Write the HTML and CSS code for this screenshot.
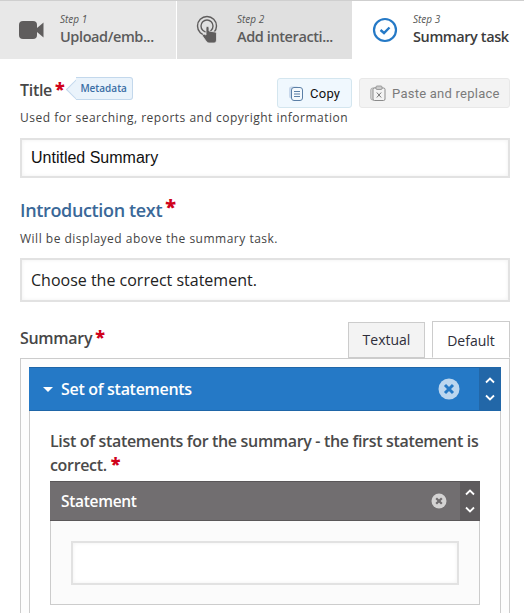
FILE: index.html
```html
<!DOCTYPE html>
<html lang="en">
<head>
  <meta charset="UTF-8" />
  <title>Summary task editor</title>
  <link rel="stylesheet" href="styles.css">
</head>
<body>

  <div class="steps">
    <div class="step step-one">
      <svg class="step-icon" width="26" height="20" viewBox="0 0 26 20"><rect x="0" y="1" width="18" height="18" rx="4" fill="#5f5d5d"/><path d="M18 8 L24.500 2.500 V17.500 L18 12 Z" fill="#5f5d5d"/></svg>
      <div class="step-text"><em>Step 1</em><span>Upload/emb...</span></div>
    </div>
    <div class="step step-two">
      <svg class="step-icon" width="24" height="30" viewBox="0 0 24 30"><circle cx="11" cy="11" r="9.500" fill="none" stroke="#5f5d5d" stroke-width="1.400"/><circle cx="11" cy="11" r="6" fill="none" stroke="#5f5d5d" stroke-width="1.400"/><path d="M10 13 C10 11 13 11 13 13 V16 L19 17 C20 17 20.500 18 20.500 19 V25 C20.500 27 19 28 18 28 H13 C12 28 11 27 10 26 L6.500 21 C6 19.500 8 18.500 10 20 Z" fill="#5f5d5d" stroke="#e0e0e0" stroke-width="0.800"/></svg>
      <div class="step-text"><em>Step 2</em><span>Add interacti...</span></div>
    </div>
    <div class="step step-three">
      <svg class="step-icon" width="26" height="26" viewBox="0 0 26 26"><circle cx="13" cy="13" r="11" fill="none" stroke="#2579c6" stroke-width="2.200"/><path d="M8.500 13 L12 16 L17.500 10.500" fill="none" stroke="#2579c6" stroke-width="2.400"/></svg>
      <div class="step-text"><em>Step 3</em><span>Summary task</span></div>
    </div>
  </div>

  <div class="form">
    <div class="title-row">
      <div class="title-left">
        <label class="field-label">Title<b class="req">*</b></label>
        <span class="metadata">Metadata</span>
      </div>
      <div class="clip-buttons">
        <button class="btn-copy">
          <svg width="16" height="16" viewBox="0 0 16 16"><rect x="1" y="1.500" width="10" height="12" rx="2.500" fill="#c9d9ec"/><rect x="3.500" y="2.500" width="11" height="13" rx="2.500" fill="#f4f9fd" stroke="#5b7fa6"/><path d="M6 6.500 H12 M6 9 H12 M6 11.500 H12" stroke="#5b7fa6"/></svg>
          Copy
        </button>
        <button class="btn-paste">
          <svg width="16" height="16" viewBox="0 0 16 16"><rect x="0.800" y="3" width="10" height="12" rx="2" fill="#ddd" stroke="#aaa"/><rect x="3" y="3" width="12" height="12.500" rx="1.500" fill="#f3f3f3" stroke="#8b8b8b"/><rect x="6" y="1" width="6" height="3.500" rx="1" fill="#ccc" stroke="#8b8b8b" stroke-width="0.800"/><path d="M6.800 7.500 L11.200 12.500 M11.200 7.500 L6.800 12.500" stroke="#777"/></svg>
          Paste and replace
        </button>
      </div>
    </div>
    <p class="hint">Used for searching, reports and copyright information</p>
    <div class="text-input input-title">Untitled Summary</div>

    <label class="field-label label-intro">Introduction text<b class="req">*</b></label>
    <p class="hint hint-intro">Will be displayed above the summary task.</p>
    <div class="text-input input-intro">Choose the correct statement.</div>

    <div class="summary-head">
      <label class="field-label label-summary">Summary<b class="req">*</b></label>
      <div class="tabs">
        <div class="tab">Textual</div>
        <div class="tab tab-active">Default</div>
      </div>
    </div>

    <div class="summary-box">
      <div class="group">
        <div class="group-head head-blue">
          <span class="caret"></span>
          <span class="group-title">Set of statements</span>
          <svg class="remove" width="22" height="22" viewBox="0 0 22 22"><circle cx="11" cy="11" r="10.500" fill="#bcd6ee"/><path d="M7 7 L15 15 M15 7 L7 15" stroke="#2579c6" stroke-width="3"/></svg>
          <div class="order order-blue">
            <svg width="10" height="7" viewBox="0 0 10 7"><path d="M1 5.500 L5 1.500 L9 5.500" fill="none" stroke="#fff" stroke-width="1.800"/></svg>
            <svg width="10" height="7" viewBox="0 0 10 7"><path d="M1 1.500 L5 5.500 L9 1.500" fill="none" stroke="#fff" stroke-width="1.800"/></svg>
          </div>
        </div>
        <div class="group-body">
          <p class="list-label">List of statements for the summary - the first statement is correct.<b class="req">*</b></p>
          <div class="statement">
            <div class="group-head head-gray">
              <span class="group-title">Statement</span>
              <svg class="remove" width="16" height="16" viewBox="0 0 16 16"><circle cx="8" cy="8" r="7.500" fill="#d4d3d3"/><path d="M5.200 5.200 L10.800 10.800 M10.800 5.200 L5.200 10.800" stroke="#6f6c6e" stroke-width="2.200"/></svg>
              <div class="order order-gray">
                <svg width="10" height="7" viewBox="0 0 10 7"><path d="M1 5.500 L5 1.500 L9 5.500" fill="none" stroke="#fff" stroke-width="1.800"/></svg>
                <svg width="10" height="7" viewBox="0 0 10 7"><path d="M1 1.500 L5 5.500 L9 1.500" fill="none" stroke="#fff" stroke-width="1.800"/></svg>
              </div>
            </div>
            <div class="statement-body">
              <div class="text-input input-statement"></div>
            </div>
          </div>
        </div>
      </div>
    </div>
  </div>

</body>
</html>
```

FILE: styles.css
```css
* {
  box-sizing: border-box;
}

html,
body {
  height: 613px;
  overflow: hidden;
}

body {
  margin: 0;
  background: #fff;
  font-family: "Open Sans", sans-serif;
  color: #3c3c3c;
}

/* steps bar */
.steps {
  display: flex;
  height: 59px;
  border-top: 1px solid #cfcfcf;
}

.step {
  display: flex;
  align-items: center;
}

.step-one {
  width: 177px;
  padding-left: 19px;
  background: #e8e8e8;
  border-right: 1px solid #fff;
}

.step-two {
  width: 175px;
  padding-left: 19px;
  background: #e0e0e0;
}

.step-three {
  flex: 1;
  padding-left: 20px;
  background: #fff;
}

.step-one .step-text {
  margin-left: 15px;
}

.step-two .step-text {
  margin-left: 17px;
}

.step-three .step-text {
  margin-left: 15px;
}

.step-text {
  display: flex;
  flex-direction: column;
}

.step-text em {
  font-size: 10px;
  line-height: 14px;
  color: #555;
}

.step-text span {
  font-size: 14.500px;
  line-height: 22px;
  font-weight: 600;
  color: #5c5c5c;
  letter-spacing: -0.4px;
}

.step-three .step-text span {
  color: #3c3c3c;
}

/* form */
.form {
  padding: 0 14px 0 20px;
}

.title-row {
  display: flex;
  justify-content: space-between;
  height: 50px;
  padding-top: 20px;
}

.title-left {
  display: flex;
  align-items: flex-start;
  height: 24px;
}

.field-label {
  font-size: 16px;
  line-height: 22px;
  font-weight: 600;
  color: #474747;
  letter-spacing: -0.3px;
}

.req {
  position: relative;
  top: -1px;
  margin-left: 3px;
  font-size: 18px;
  line-height: 10px;
  color: #d0021b;
}

.metadata {
  position: relative;
  margin-left: 12px;
  margin-top: -2px;
  height: 23px;
  padding: 0 5px 0 4px;
  background: #eaf3fb;
  border: 1px solid #c3d8ec;
  border-left: none;
  border-radius: 0 3px 3px 0;
  font-size: 10px;
  line-height: 21px;
  font-weight: 600;
  color: #3a6ea5;
}

.metadata::before {
  content: "";
  position: absolute;
  left: -7px;
  top: 4px;
  width: 14px;
  height: 14px;
  background: #eaf3fb;
  border-left: 1px solid #c3d8ec;
  border-bottom: 1px solid #c3d8ec;
  transform: rotate(45deg);
  z-index: -1;
}

.clip-buttons {
  display: flex;
  gap: 7px;
  margin-top: -1px;
}

.clip-buttons button {
  display: flex;
  align-items: center;
  gap: 6px;
  height: 30px;
  border-radius: 3px;
  font-family: Roboto, sans-serif;
  font-size: 13px;
  letter-spacing: 0.25px;
  white-space: nowrap;
}

.btn-copy {
  width: 75px;
  padding: 0 0 0 10px;
  background: #f0f8fe;
  border: 1px solid #d4e6ef;
  color: #111;
}

.btn-paste {
  width: 151px;
  padding: 0 0 0 10px;
  background: #f3f3f3;
  border: 1px solid #e8e8e8;
  color: #7b7b7b;
}

.hint {
  margin: 0;
  font-size: 12px;
  line-height: 18px;
  letter-spacing: 0.5px;
  color: #444;
}

.text-input {
  border: 2px solid #e2e2e2;
  background: #fff;
  box-shadow: inset 0 0 4px rgba(0, 0, 0, 0.06);
  padding-left: 9px;
  color: #222;
}

.input-title {
  height: 40px;
  margin-top: 11px;
  font-family: "Liberation Sans", sans-serif;
  font-size: 16px;
  line-height: 36px;
  color: #111;
}

.label-intro {
  display: block;
  margin-top: 20px;
  font-size: 18px;
  line-height: 24px;
  color: #3a6898;
  letter-spacing: -0.35px;
}

.label-intro .req {
  font-size: 20px;
  top: -3px;
  margin-left: 3px;
}

.hint-intro {
  margin-top: 8px;
}

.input-intro {
  height: 44px;
  margin-top: 10px;
  font-size: 16px;
  line-height: 40px;
}

.summary-head {
  display: flex;
  justify-content: space-between;
  height: 36px;
  margin-top: 20px;
}

.label-summary {
  margin-top: 5px;
}

.tabs {
  display: flex;
  gap: 7px;
  align-items: flex-end;
  position: relative;
  z-index: 1;
}

.tab {
  width: 77px;
  height: 36px;
  background: #f3f3f3;
  border: 1px solid #ccc;
  font-size: 14px;
  line-height: 34px;
  text-align: center;
  color: #2e2e3a;
}

.tab-active {
  width: 78px;
  height: 37px;
  background: #fff;
  border-bottom: 1px solid #fff;
  line-height: 37px;
}

.summary-box {
  height: 255px;
  padding: 8px 8px 0 8px;
  background: #fdfdfd;
  border: 1px solid #ccc;
  border-bottom: none;
}

.group {
  height: 100%;
  background: #fff;
  border-right: 1px solid #ccc;
  border-left: 1px solid #ccc;
}

.group-head {
  display: flex;
  align-items: center;
  color: #fff;
  font-weight: 600;
}

.group-title {
  flex: 1;
  letter-spacing: -0.3px;
}

.head-blue {
  height: 44px;
  margin: 0 -1px;
  padding-left: 14px;
  background: #2579c6;
  border-top: 1px solid #1f66a8;
  border-bottom: 1px solid #1f66a8;
  font-size: 16px;
}

.caret {
  width: 0;
  height: 0;
  margin-right: 8px;
  border-left: 5px solid transparent;
  border-right: 5px solid transparent;
  border-top: 5px solid #fff;
}

.order {
  display: flex;
  flex-direction: column;
  align-items: center;
  justify-content: space-around;
  align-self: stretch;
  width: 22px;
}

.order-blue {
  margin-left: 19px;
  padding: 4px 0;
  background: #2267a8;
}

.group-body {
  padding: 0 20px;
}

.list-label {
  margin: 18px 0 0 0;
  font-size: 16px;
  line-height: 24px;
  font-weight: 600;
  color: #4a4a4a;
  letter-spacing: -0.33px;
}

.list-label .req {
  margin-left: 4px;
}

.statement {
  margin-top: 4px;
}

.head-gray {
  height: 40px;
  padding-left: 11px;
  background: #716e70;
  border-top: 1px solid #5a5759;
  border-bottom: 1px solid #5a5759;
  font-size: 15.500px;
}

.order-gray {
  margin-left: 13px;
  padding: 2px 0;
  background: #5f5c5e;
  width: 20px;
}

.statement-body {
  height: 84px;
  padding: 20px 20px;
  background: #fbfbfb;
  border: 1px solid #ccc;
  border-top: none;
}

.input-statement {
  height: 44px;
}
```
